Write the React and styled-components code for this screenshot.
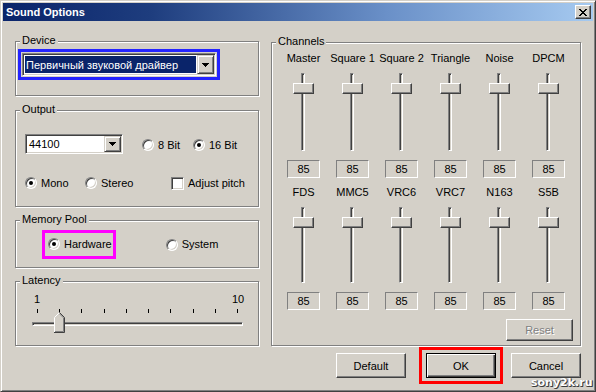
import React from 'react';
import styled, { createGlobalStyle, css } from 'styled-components';

const GlobalStyle = createGlobalStyle`
  html, body {
    margin: 0;
    padding: 0;
    background: #d4d0c8;
  }
  body {
    font-family: "Liberation Sans", Arial, sans-serif;
    font-size: 11px;
    color: #000;
  }
`;

const raised = css`
  background: #d4d0c8;
  border: 1px solid;
  border-color: #fff #404040 #404040 #fff;
  box-shadow: inset -1px -1px 0 #808080;
`;

const sunken = css`
  border: 1px solid;
  border-color: #808080 #fff #fff #808080;
  box-shadow: inset 1px 1px 0 #404040, inset -1px -1px 0 #d4d0c8;
`;

const Window = styled.div`
  position: relative;
  box-sizing: border-box;
  width: 596px;
  height: 392px;
  display: flex;
  flex-direction: column;
  background: #d4d0c8;
  border: 1px solid;
  border-color: #d4d0c8 #404040 #404040 #d4d0c8;
  box-shadow: inset 1px 1px 0 #fff, inset -1px -1px 0 #808080;
  padding: 2px;
`;

const TitleBar = styled.div`
  height: 18px;
  flex: none;
  display: flex;
  align-items: center;
  justify-content: space-between;
  padding: 0 2px 0 3px;
  background: linear-gradient(to right, #0a246a 0%, #1e3d7e 25%, #6a90c8 65%, #a6caf0 100%);
  color: #fff;
  font-weight: bold;
`;

const CloseButton = styled.div`
  box-sizing: border-box;
  width: 16px;
  height: 14px;
  display: flex;
  align-items: center;
  justify-content: center;
  ${raised}
`;

const Body = styled.div`
  flex: 1;
  display: flex;
  flex-direction: column;
  padding: 20px 12px 0 12px;
`;

const Columns = styled.div`
  display: grid;
  grid-template-columns: 244px 310px;
  column-gap: 12px;
  align-items: start;
`;

const LeftColumn = styled.div`
  display: flex;
  flex-direction: column;
`;

const Group = styled.div`
  position: relative;
  box-sizing: border-box;
  height: ${p => p.$h}px;
  margin-top: ${p => p.$mt || 0}px;
  border: 1px solid #808080;
  box-shadow: inset 1px 1px 0 #fff, 1px 1px 0 #fff;
`;

const Legend = styled.span`
  position: absolute;
  top: -8px;
  left: 4px;
  padding: 0 2px;
  line-height: 13px;
  background: #d4d0c8;
`;

const DeviceGroup = styled(Group)`
  padding: 7px 0 0 2px;
`;

const OutputGroup = styled(Group)`
  padding: 23px 0 0 9px;
`;

const MemoryGroup = styled(Group)`
  display: flex;
  align-items: center;
  align-self: stretch;
  padding: 9px 0 0 26px;
  align-items: flex-start;
`;

const LatencyGroup = styled(Group)`
  padding-top: 11px;
`;

const Highlight = styled.div`
  display: flex;
  align-items: center;
  width: fit-content;
  border: 3px solid ${p => p.$c};
  padding: ${p => p.$pad};
`;

const Combo = styled.div`
  box-sizing: border-box;
  width: ${p => p.$w}px;
  height: ${p => p.$h}px;
  display: flex;
  background: #fff;
  padding: 1px;
  ${sunken}
`;

const ComboText = styled.div`
  flex: 1;
  display: flex;
  align-items: center;
  margin: 1px 1px 1px 1px;
  padding-left: 1px;
  white-space: nowrap;
  background: ${p => (p.$selected ? '#0a246a' : 'transparent')};
  color: ${p => (p.$selected ? '#fff' : '#000')};
`;

const DropButton = styled.div`
  box-sizing: border-box;
  width: 17px;
  display: flex;
  align-items: center;
  justify-content: center;
  background: #d4d0c8;
  border: 1px solid;
  border-color: #d4d0c8 #404040 #404040 #d4d0c8;
  box-shadow: inset 1px 1px 0 #fff, inset -1px -1px 0 #808080;
`;

const OptRow = styled.div`
  display: flex;
  align-items: center;
  margin-top: ${p => p.$mt || 0}px;
`;

const Option = styled.div`
  display: flex;
  align-items: center;
  width: ${p => (p.$w ? `${p.$w}px` : 'auto')};
  margin-left: ${p => p.$ml || 0}px;
  margin-top: ${p => (p.$dy || 0) * 2}px;
  height: 14px;
  line-height: 13px;
  white-space: nowrap;
`;

const Radio = styled.span`
  position: relative;
  box-sizing: border-box;
  width: 12px;
  height: 12px;
  flex: none;
  margin-right: 4px;
  border-radius: 50%;
  background: #fff;
  ${sunken}

  &::after {
    content: '';
    display: ${p => (p.$on ? 'block' : 'none')};
    position: absolute;
    left: 3px;
    top: 3px;
    width: 4px;
    height: 4px;
    border-radius: 50%;
    background: #000;
  }
`;

const Check = styled.span`
  box-sizing: border-box;
  width: 13px;
  height: 13px;
  flex: none;
  margin-right: 4px;
  background: #fff;
  ${sunken}
`;

const ScaleLabels = styled.div`
  display: flex;
  justify-content: space-between;
  padding: 0 10px 0 11px;
  line-height: 13px;

  span {
    width: 20px;
    text-align: center;
  }
`;

const Ticks = styled.div`
  display: flex;
  justify-content: space-between;
  height: 4px;
  margin-top: 3px;
  padding: 0 20px 0 21px;
`;

const Tick = styled.span`
  width: 1px;
  height: 4px;
  background: #000;
`;

const HTrack = styled.div`
  position: relative;
  box-sizing: border-box;
  height: 4px;
  margin: 9px 15px 0 16px;
  background: #d4d0c8;
  border: 1px solid;
  border-color: #808080 #fff #fff #808080;
  box-shadow: inset 1px 1px 0 #404040;
`;

const HThumb = styled.svg`
  position: absolute;
  top: -11px;
  display: block;
`;

const ChannelsGroup = styled(Group)`
  display: flex;
  flex-direction: column;
  padding: 9px 7px 4px 7px;
`;

const ChannelRow = styled.div`
  display: grid;
  grid-template-columns: repeat(6, 49px);
  margin-top: ${p => p.$mt || 0}px;
`;

const Cell = styled.div`
  display: flex;
  flex-direction: column;
  align-items: center;
`;

const ChLabel = styled.div`
  height: 13px;
  line-height: 13px;
  margin-bottom: 8px;
  white-space: nowrap;
`;

const VSlider = styled.div`
  position: relative;
  width: 21px;
  height: ${p => p.$len}px;
  margin-bottom: 9px;
`;

const VGroove = styled.div`
  box-sizing: border-box;
  width: 4px;
  height: 100%;
  margin-left: 8px;
  background: #d4d0c8;
  border: 1px solid;
  border-color: #808080 #fff #fff #808080;
  box-shadow: inset 1px 1px 0 #404040;
`;

const VThumb = styled.div`
  position: absolute;
  left: 0;
  box-sizing: border-box;
  width: 21px;
  height: 11px;
  ${raised}
`;

const ValueBox = styled.div`
  box-sizing: border-box;
  width: 33px;
  height: 18px;
  display: flex;
  align-items: center;
  justify-content: center;
  border: 1px solid;
  border-color: #808080 #fff #fff #808080;
`;

const ResetRow = styled.div`
  display: flex;
  justify-content: flex-end;
  margin-top: 9px;
`;

const Button = styled.button`
  box-sizing: border-box;
  width: ${p => p.$w}px;
  height: ${p => p.$h}px;
  margin: 0 ${p => p.$mr || 0}px 0 0;
  padding: 0;
  font: inherit;
  color: #000;
  ${raised}
  box-shadow: inset -1px -1px 0 #808080;

  &:disabled {
    color: #808080;
    text-shadow: 1px 1px 0 #fff;
  }

  ${p =>
    p.$default &&
    css`
      border: 1px solid #000;
      box-shadow: inset 1px 1px 0 #fff, inset -1px -1px 0 #404040, inset -2px -2px 0 #808080;
    `}
`;

const ButtonRow = styled.div`
  display: flex;
  justify-content: flex-end;
  align-items: center;
  margin-top: 1px;
`;

const Watermark = styled.div`
  position: absolute;
  left: 530px;
  top: 375px;
  font-family: "DejaVu Sans", Verdana, sans-serif;
  font-weight: bold;
  font-size: 11px;
  line-height: 13px;
  color: #fff;
  text-shadow: 1px 1px 0 #3c3c3c, 0 1px 0 #6a6a6a, 1px 0 0 #6a6a6a;
`;

const X_ROWS = ['11000011', '01100110', '00111100', '00011000', '00111100', '01100110', '11000011'];

const CloseGlyph = () => (
  <svg width="8" height="7" shapeRendering="crispEdges">
    {X_ROWS.flatMap((row, y) =>
      [...row].map((c, x) => (c === '1' ? <rect key={`${x}-${y}`} x={x} y={y} width="1" height="1" /> : null))
    )}
  </svg>
);

const Arrow = () => (
  <svg width="7" height="4" shapeRendering="crispEdges">
    <rect x="0" y="0" width="7" height="1" />
    <rect x="1" y="1" width="5" height="1" />
    <rect x="2" y="2" width="3" height="1" />
    <rect x="3" y="3" width="1" height="1" />
  </svg>
);

const SliderThumbUp = ({ left }) => (
  <HThumb width="11" height="21" style={{ left }}>
    <path d="M0.5 20.5V5.5L5.5 0.5L10.5 5.5V20.5Z" fill="#d4d0c8" />
    <path d="M0.5 20V5.5L5.5 0.5" fill="none" stroke="#fff" />
    <path d="M5.5 0.5L10.5 5.5V20.5H0" fill="none" stroke="#404040" />
    <path d="M5.5 1.9L9.5 5.9V19.5H1" fill="none" stroke="#808080" />
  </HThumb>
);

const topChannels = ['Master', 'Square 1', 'Square 2', 'Triangle', 'Noise', 'DPCM'];
const bottomChannels = ['FDS', 'MMC5', 'VRC6', 'VRC7', 'N163', 'S5B'];

const ChannelSlider = ({ name, value, len }) => (
  <Cell>
    <ChLabel>{name}</ChLabel>
    <VSlider $len={len}>
      <VGroove />
      <VThumb style={{ top: Math.round((1 - value / 100) * (len - 11)) }} />
    </VSlider>
    <ValueBox>{value}</ValueBox>
  </Cell>
);

const latency = 2;

export default function App() {
  return (
    <>
      <GlobalStyle />
      <Window>
        <TitleBar>
          <span>Sound Options</span>
          <CloseButton>
            <CloseGlyph />
          </CloseButton>
        </TitleBar>
        <Body>
          <Columns>
            <LeftColumn>
              <DeviceGroup $h={55}>
                <Legend>Device</Legend>
                <Highlight $c="#2424ff" $pad="1px 1px 1px 1px">
                  <Combo $w={194} $h={23}>
                    <ComboText $selected>Первичный звуковой драйвер</ComboText>
                    <DropButton>
                      <Arrow />
                    </DropButton>
                  </Combo>
                </Highlight>
              </DeviceGroup>

              <OutputGroup $h={97} $mt={14}>
                <Legend>Output</Legend>
                <OptRow>
                  <Combo $w={98} $h={20}>
                    <ComboText>44100</ComboText>
                    <DropButton>
                      <Arrow />
                    </DropButton>
                  </Combo>
                  <Option $w={51} $ml={19} $dy={1}>
                    <Radio />8 Bit
                  </Option>
                  <Option $dy={1}>
                    <Radio $on />16 Bit
                  </Option>
                </OptRow>
                <OptRow $mt={22}>
                  <Option $w={60}>
                    <Radio $on />Mono
                  </Option>
                  <Option $w={86}>
                    <Radio />Stereo
                  </Option>
                  <Option>
                    <Check />Adjust pitch
                  </Option>
                </OptRow>
              </OutputGroup>

              <MemoryGroup $h={48} $mt={13}>
                <Legend>Memory Pool</Legend>
                <OptRow>
                  <Highlight $c="#ff00ff" $pad="4px 1px 5px 3px">
                    <Option>
                      <Radio $on />Hardware
                    </Option>
                  </Highlight>
                  <Option $ml={50}>
                    <Radio />System
                  </Option>
                </OptRow>
              </MemoryGroup>

              <LatencyGroup $h={65} $mt={13}>
                <Legend>Latency</Legend>
                <ScaleLabels>
                  <span>1</span>
                  <span>10</span>
                </ScaleLabels>
                <Ticks>
                  {Array.from({ length: 10 }, (_, i) => (
                    <Tick key={i} />
                  ))}
                </Ticks>
                <HTrack>
                  <SliderThumbUp left={Math.round(4 + ((latency - 1) * 200) / 9) - 5} />
                </HTrack>
              </LatencyGroup>
            </LeftColumn>

            <ChannelsGroup $h={304} $mt={1}>
              <Legend>Channels</Legend>
              <ChannelRow>
                {topChannels.map(n => (
                  <ChannelSlider key={n} name={n} value={85} len={78} />
                ))}
              </ChannelRow>
              <ChannelRow $mt={8}>
                {bottomChannels.map(n => (
                  <ChannelSlider key={n} name={n} value={85} len={76} />
                ))}
              </ChannelRow>
              <ResetRow>
                <Button $w={67} $h={22} disabled>
                  Reset
                </Button>
              </ResetRow>
            </ChannelsGroup>
          </Columns>

          <ButtonRow>
            <Button $w={70} $h={25} $mr={13}>
              Default
            </Button>
            <Highlight $c="#ff0000" $pad="3px 4px">
              <Button $w={70} $h={25} $default>
                OK
              </Button>
            </Highlight>
            <Button $w={70} $h={25} style={{ marginLeft: 8 }}>
              Cancel
            </Button>
          </ButtonRow>
        </Body>
        <Watermark>sony2k.ru</Watermark>
      </Window>
    </>
  );
}
